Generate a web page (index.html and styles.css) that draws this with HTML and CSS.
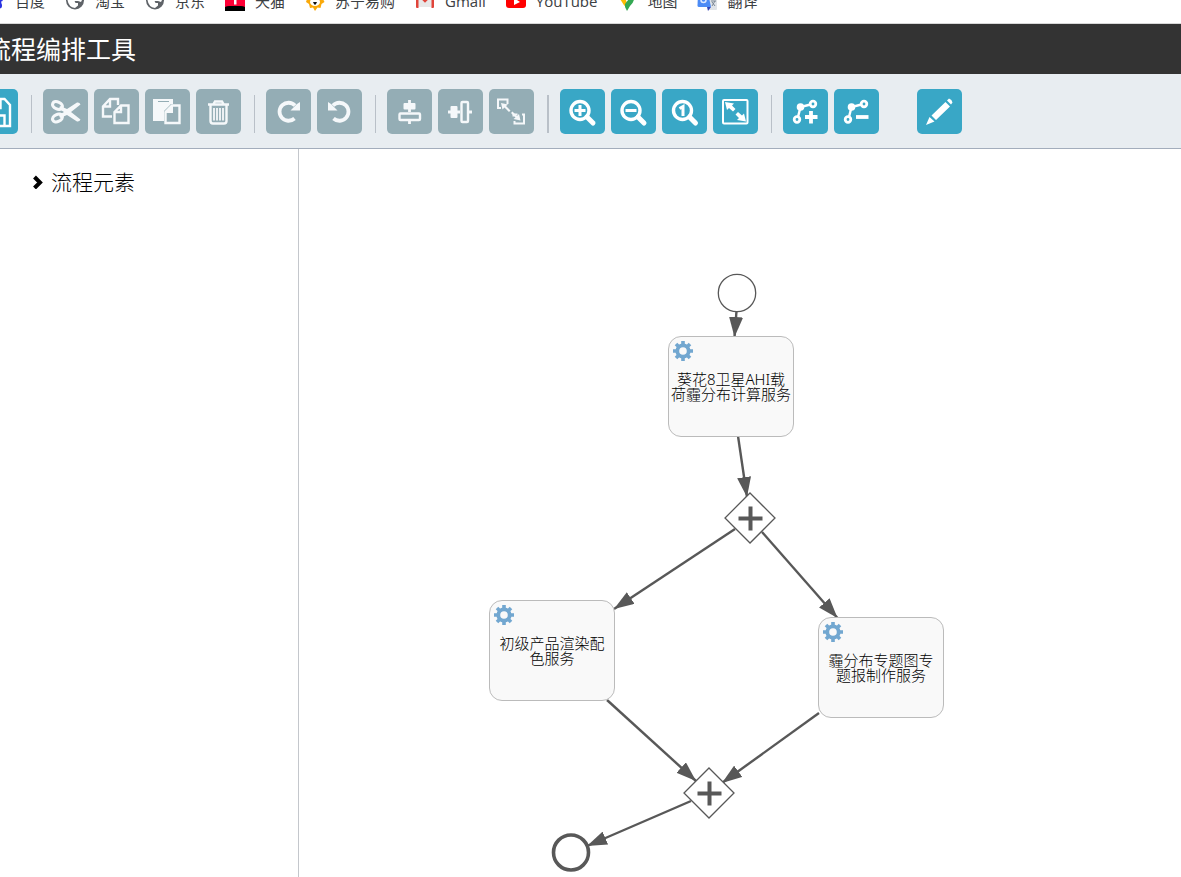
FILE: index.html
```html
<!DOCTYPE html>
<html lang="zh-CN">
<head>
<meta charset="utf-8">
<title>流程编排工具</title>
<link rel="stylesheet" href="styles.css">
</head>
<body>
<nav class="bookmarks" aria-label="书签">
  <a class="bookmark" href="#"><svg class="bookmark-icon" viewBox="0 0 20 20"><g fill="#2932e1"><ellipse cx="10" cy="12" rx="5" ry="4"/><circle cx="14.500" cy="15" r="2.500"/><ellipse cx="16" cy="8" rx="2" ry="2.500"/><path d="M14 10h2l1 5-2 1z"/></g></svg>百度</a>
  <a class="bookmark" href="#"><svg class="bookmark-icon" viewBox="0 0 20 20"><circle cx="10" cy="9.500" r="9" fill="#5f6368"/><path d="M2.500 9h5q3 1 3 3h2.500v2.500l-3 2.500q-6.500-1-7.500-8zM6 3h8l3.500 5-1.500 3-3-1H9L6 8z" fill="#fff"/></svg>淘宝</a>
  <a class="bookmark" href="#"><svg class="bookmark-icon" viewBox="0 0 20 20"><circle cx="10" cy="9.500" r="9" fill="#5f6368"/><path d="M2.500 9h5q3 1 3 3h2.500v2.500l-3 2.500q-6.500-1-7.500-8zM6 3h8l3.500 5-1.500 3-3-1H9L6 8z" fill="#fff"/></svg>京东</a>
  <a class="bookmark" href="#"><svg class="bookmark-icon" viewBox="0 0 20 20"><path d="M0 0h20v20H0z" fill="#ff0036"/><path d="M0 16q2-1 4-1h12q2 0 4 1v4H0z" fill="#000"/><path d="M9 4h2.500v9.500H9z" fill="#fff"/></svg>天猫</a>
  <a class="bookmark" href="#"><svg class="bookmark-icon" viewBox="0 0 20 20"><path d="M1 2h18l-1 6 1.500 3-3 2-1 4-3-.5L10 20l-2-3.500-3 .5-1-4-3-2L2 8z" fill="#faa90a"/><ellipse cx="10" cy="11" rx="5" ry="4" fill="#fff"/><path d="M8 11h4l-1 2-1 1-1-1z" fill="#111"/></svg>苏宁易购</a>
  <a class="bookmark" href="#"><svg class="bookmark-icon" viewBox="0 0 20 20"><path d="M2 2h16v14H2z" fill="#e8e8e8"/><path d="M1 2h2.500v15H2q-1 0-1-1zM16.500 2H19v14q0 1-1 1h-1.500z" fill="#e0443a"/><path d="M2 2l8 8 8-8" fill="none" stroke="#e0443a" stroke-width="2.500"/></svg>Gmail</a>
  <a class="bookmark" href="#"><svg class="bookmark-icon" viewBox="0 0 20 20"><rect y="3" width="20" height="14" rx="3" fill="#f00"/><path d="M8 7l6 4-6 3z" fill="#fff"/></svg>YouTube</a>
  <a class="bookmark" href="#"><svg class="bookmark-icon" viewBox="0 0 20 20"><path d="M3 8l4-4 3 8-2.500 3z" fill="#fbbc04"/><path d="M8 13l7-9 2 4q0 3-4 7l-3 5-2-4z" fill="#34a853"/></svg>地图</a>
  <a class="bookmark" href="#"><svg class="bookmark-icon" viewBox="0 0 20 20"><path d="M8 5h10q2 0 2 2v11q0 1-1 1h-7z" fill="#dfe3e8"/><path d="M1 2h10l3 14H2q-1.500 0-1.500-1.500z" fill="#4c8bf5"/><path d="M10 16h4l-3 4z" fill="#3044b8"/><circle cx="6.500" cy="9" r="2.500" fill="none" stroke="#dce8ff" stroke-width="1.500"/><path d="M14 10h5M15 15l3-5M15 11l3 4" stroke="#7b8794" fill="none"/></svg>翻译</a>
</nav>
<header class="header"><h1 class="title">流程编排工具</h1></header>

<div class="toolbar" role="toolbar" aria-label="工具栏">
  <div class="group">
    <button class="tool" aria-label="保存"><svg viewBox="0 0 45 45"><path class="line" d="M9 10h22.500l5.500 6v21H9z"/><path class="line" d="M15 36V26.500h16.500V36M17 10v9h10.500v-9"/></svg></button>
  </div>
  <span class="separator"></span>
  <div class="group">
    <button class="tool" disabled aria-label="剪切"><svg viewBox="0 0 45 45"><g fill="none" stroke="currentColor" stroke-width="3.200"><ellipse cx="14.500" cy="16.500" rx="5.200" ry="3.500" transform="rotate(25 14.500 16.500)"/><ellipse cx="14.500" cy="29" rx="5.200" ry="3.500" transform="rotate(-25 14.500 29)"/></g><path fill="currentColor" d="M17 17l7 3L34 13.500q2.500-.5 3.500 2L28 23l9.500 7.500q-1 2.500-3.500 2L24 26l-7 3-1-3 5-3-5-3z"/></svg></button>
    <button class="tool" disabled aria-label="复制"><svg viewBox="0 0 45 45"><path class="line" d="M18 27.500H9v-10l7-7.500h8v6M9 17.500h7V10M20.500 23l6.500-6.500h7.500v17.500h-14zM20.500 23h6.500v-6.500"/></svg></button>
    <button class="tool" disabled aria-label="粘贴"><svg viewBox="0 0 45 45"><path fill="currentColor" d="M8 10h20v5h-2l-7 7v10H8z"/><path d="M13 12.500h11" stroke="#94adb5"/><path class="line" d="M20.500 23l6.500-6.500h7.500v17.500h-14z"/><path fill="currentColor" d="M20 24l8-8v8z"/></svg></button>
    <button class="tool" disabled aria-label="删除"><svg viewBox="0 0 45 45"><path class="line" d="M12 15.500h21M17.500 15l1.500-2.500h7l1.500 2.500M14.500 16v16q0 2.500 2.500 2.500h11q2.500 0 2.500-2.500V16"/><path d="M18 19v12.500M21 19v12.500M24 19v12.500M27 19v12.500" stroke="currentColor" stroke-width="1.800"/></svg></button>
  </div>
  <span class="separator"></span>
  <div class="group">
    <button class="tool" disabled aria-label="重做"><svg viewBox="0 0 45 45"><path d="M29 16.500a9 9 0 1 0-.5 13" fill="none" stroke="currentColor" stroke-width="3.800"/><path d="M24.500 21.500H34V13l-3 2z" fill="currentColor"/></svg></button>
    <button class="tool" disabled aria-label="撤销"><svg viewBox="0 0 45 45"><path d="M16 16.500a9 9 0 1 1 .5 13" fill="none" stroke="currentColor" stroke-width="3.800"/><path d="M20.500 21.500H11V13l3 2z" fill="currentColor"/></svg></button>
  </div>
  <span class="separator"></span>
  <div class="group">
    <button class="tool" disabled aria-label="垂直对齐"><svg viewBox="0 0 45 45"><path d="M22.500 11v12M22.500 32v3" stroke="currentColor" stroke-width="2.800"/><rect x="16.500" y="14" width="12" height="6.500" rx="1" fill="currentColor"/><rect class="line" x="12.500" y="24.500" width="20.500" height="6.500" rx="1"/></svg></button>
    <button class="tool" disabled aria-label="水平对齐"><svg viewBox="0 0 45 45"><path d="M10 23h12M30 23h4" stroke="currentColor" stroke-width="2.800"/><rect x="12.500" y="17" width="7" height="12" rx="1" fill="currentColor"/><rect class="line" x="23.500" y="13" width="6.500" height="20" rx="1"/></svg></button>
    <button class="tool" disabled aria-label="相同大小"><svg viewBox="0 0 45 45"><path class="line thin" d="M12 19H9v-8.500h9.500V15M33 25.500h2v9h-9.500V32M24.500 27.500v-2h4"/><path fill="currentColor" d="M12 14l7 1.500-2 1.500 4.500 4.500-1.500 1.500-4.500-4.500-2 2zM31.500 31.500l-7-1.500 2-1.500-4.500-4.500 1.500-1.500 4.500 4.500 2-2z"/></svg></button>
  </div>
  <span class="separator wide"></span>
  <div class="group">
    <button class="tool" aria-label="放大"><svg viewBox="0 0 45 45"><circle class="lens" cx="20" cy="21.500" r="9"/><path class="handle" d="M27 28l6 6"/><path class="sign" d="M14.500 21.500h11M20 16v11"/></svg></button>
    <button class="tool" aria-label="缩小"><svg viewBox="0 0 45 45"><circle class="lens" cx="20" cy="21.500" r="9"/><path class="handle" d="M27 28l6 6"/><path class="sign" d="M14.500 21.500h11"/></svg></button>
    <button class="tool" aria-label="实际大小"><svg viewBox="0 0 45 45"><circle class="lens" cx="20.500" cy="21.500" r="9"/><path class="handle" d="M27.500 28l6 6"/><path class="sign" d="M17.500 19.500l3.500-2v9.500"/></svg></button>
    <button class="tool" aria-label="适应屏幕"><svg viewBox="0 0 45 45"><rect class="line thin" x="10" y="11" width="24.500" height="23.500" rx="1"/><path fill="currentColor" d="M12 13l9 1.500-2 2 3.500 3.500-2.500 2.500-4-3.500-2 2zM33 32.500l-9-1.500 2-2-3.500-3.500 2.500-2.500 4 3.500 2-2z"/></svg></button>
  </div>
  <span class="separator"></span>
  <div class="group">
    <button class="tool" aria-label="添加折点"><svg viewBox="0 0 45 45"><path class="line" d="M15 28l2.500-10 10-2.500"/><circle cx="17.500" cy="18" r="3.800" fill="currentColor"/><circle class="ring" cx="14" cy="30.500" r="2.800"/><circle class="ring" cx="30" cy="15" r="2.800"/><path d="M22 28h12.500M28 22v12.500" stroke="currentColor" stroke-width="3.800"/></svg></button>
    <button class="tool" aria-label="删除折点"><svg viewBox="0 0 45 45"><path class="line" d="M15 28l2.500-10 10-2.500"/><circle cx="17.500" cy="18" r="3.800" fill="currentColor"/><circle class="ring" cx="14" cy="30.500" r="2.800"/><circle class="ring" cx="30" cy="15" r="2.800"/><path d="M22 28h12.500" stroke="currentColor" stroke-width="3.800"/></svg></button>
  </div>
  <div class="group edit-group">
    <button class="tool" aria-label="编辑"><svg viewBox="0 0 45 45"><path fill="currentColor" d="M9 36l3.500-8 5 4.500zM14.500 26.500L28.500 13l4.500 4.500L19 31zM30 11.500l2-2q3 1 3.500 4l-1.500 2z"/></svg></button>
  </div>
</div>

<div class="workspace">
  <aside class="sidebar">
    <button class="palette-toggle" aria-expanded="false"><svg class="chevron" viewBox="0 0 11 14"><path d="M2.500 2L8 7.500 2.500 13" fill="none" stroke="#000" stroke-width="4"/></svg>流程元素</button>
  </aside>
  <main class="canvas">
    <svg class="edges" aria-hidden="true">
      <defs>
        <marker id="arrow" viewBox="0 0 20 14" refX="20" refY="7" markerWidth="20" markerHeight="14" markerUnits="userSpaceOnUse" orient="auto"><path d="M0 0L20 7 0 14z" fill="#585858"/></marker>
        <symbol id="gear" viewBox="-10 -10 20 20"><g fill="none" stroke="#72a7d0"><circle r="5.700" stroke-width="3.800"/><path d="M0-10V-6M0 10V6M-10 0h4M10 0H6M-7-7l3 3M7 7L4 4M7-7L4-4M-7 7l3-3" stroke-width="3.600"/></g></symbol>
      </defs>
      <g class="flows" marker-end="url(#arrow)">
        <path d="M437.500 162L435.500 188"/>
        <path d="M439 287L448 348"/>
        <path d="M436 380L315 460"/>
        <path d="M463 383L538.500 469"/>
        <path d="M308 551L397 632"/>
        <path d="M520 564L423 634"/>
        <path d="M392 652L288 697"/>
      </g>
      <circle class="event" cx="438" cy="144" r="18.700"/>
      <circle class="event end" cx="272" cy="703.500" r="17.500"/>
      <path class="event" d="M451 344l25 25-25 25-25-25zM410 619l25 25-25 25-25-25z"/>
      <path class="cross" d="M439.500 369.500h24M451.500 357.500v24M398.500 644.500h24M410.500 632.500v24"/>
    </svg>
    <div class="task task-compute"><svg class="gear"><use href="#gear"/></svg>葵花8卫星AHI载<br>荷霾分布计算服务</div>
    <div class="task task-render"><svg class="gear"><use href="#gear"/></svg>初级产品渲染配<br>色服务</div>
    <div class="task task-report"><svg class="gear"><use href="#gear"/></svg>霾分布专题图专<br>题报制作服务</div>
  </main>
</div>
</body>
</html>
```
FILE: styles.css
```css
* { box-sizing: border-box; }

body {
  margin: 0;
  height: 100vh;
  display: flex;
  flex-direction: column;
  overflow: hidden;
  background: #fff;
  color: #000;
  font-family: "Noto Sans", "Noto Sans CJK SC", sans-serif;
}

button { font: inherit; border: 0; padding: 0; }

.bookmarks {
  display: flex;
  flex: none;
  align-items: flex-end;
  gap: 20px;
  height: 24px;
  padding-bottom: 12px;
  margin-left: -15px;
  overflow: hidden;
  border-bottom: 1px solid #d8d8d8;
}

.bookmark {
  display: flex;
  flex: none;
  align-items: center;
  gap: 10px;
  height: 20px;
  color: #3c4043;
  font-family: "Open Sans", "Noto Sans CJK SC", sans-serif;
  font-size: 15px;
  line-height: 20px;
  text-decoration: none;
}

.bookmark-icon { width: 20px; height: 20px; }

.header {
  flex: none;
  background: #333;
  color: #fff;
}

.title {
  margin: 0 0 0 -14px;
  font-size: 25px;
  font-weight: 400;
  line-height: 50px;
  white-space: nowrap;
}

.toolbar {
  display: flex;
  flex: none;
  padding: 15px 0 14px;
  background: #e8edf1;
  border-bottom: 1px solid #a3adbc;
}

.group { display: flex; flex: none; gap: 6px; }
.group:first-child { margin-left: -27px; }
.edit-group { margin-left: 38px; }

.tool {
  width: 45px;
  height: 45px;
  border-radius: 5px;
  background: #39a7c6;
  color: #fff;
}

.tool:disabled { background: #94adb5; color: #f5f8fa; }
.tool svg { display: block; width: 45px; height: 45px; }

.line { fill: none; stroke: currentColor; stroke-width: 2.4; }
.thin { stroke-width: 2; }
.ring { fill: #39a7c6; stroke: currentColor; stroke-width: 2.8; }
.lens { fill: none; stroke: currentColor; stroke-width: 3.4; }
.sign { fill: none; stroke: currentColor; stroke-width: 3; }
.handle { fill: none; stroke: currentColor; stroke-width: 5; stroke-linecap: round; }

.separator {
  flex: none;
  align-self: flex-end;
  width: 1px;
  height: 38px;
  margin: 0 11px 1px 13px;
  background: #b9c0c8;
}

.wide { width: 2px; }

.workspace { display: flex; flex: 1; min-height: 0; }

.sidebar {
  flex: none;
  width: 299px;
  padding: 17px 32px;
  border-right: 1px solid #c4c7cc;
}

.palette-toggle {
  display: flex;
  align-items: center;
  gap: 8px;
  background: none;
  color: #000;
  font-size: 21px;
  font-weight: 300;
  line-height: 32px;
}

.chevron { width: 11px; height: 14px; }

.canvas { position: relative; flex: 1; overflow: hidden; }

.edges { display: block; width: 100%; height: 100%; }
.flows { fill: none; stroke: #585858; stroke-width: 2.4; }
.event { fill: #fff; stroke: #585858; stroke-width: 1.3; }
.end { stroke-width: 3.6; }
.cross { stroke: #585858; stroke-width: 4; }

.task {
  position: absolute;
  width: 126px;
  height: 101px;
  padding-top: 35px;
  border: 1px solid #bbb;
  border-radius: 13px;
  background: #f9f9f9;
  font-size: 15px;
  font-weight: 300;
  line-height: 15px;
  text-align: center;
  white-space: nowrap;
}

.task-compute { left: 369px; top: 187px; }
.task-render { left: 190px; top: 451px; }
.task-report { left: 519px; top: 468px; }

.gear {
  position: absolute;
  left: 4px;
  top: 4px;
  width: 20px;
  height: 20px;
}
```
